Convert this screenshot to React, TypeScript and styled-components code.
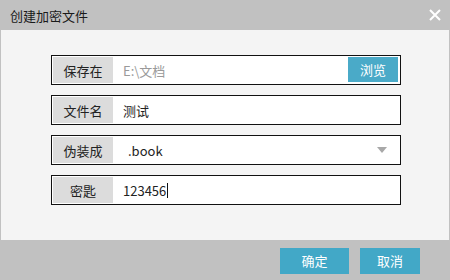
import React from "react";
import styled, { createGlobalStyle } from "styled-components";

const Global = createGlobalStyle`
  html, body { margin: 0; padding: 0; }
  body { width: 450px; height: 280px; overflow: hidden; font-family: "Noto Sans CJK SC", "Noto Sans", sans-serif; }
`;

const Dialog = styled.div`
  width: 450px;
  height: 280px;
  display: flex;
  flex-direction: column;
  background: #c1c1c1;
`;

const TitleBar = styled.div`
  height: 30px;
  display: flex;
  align-items: center;
  justify-content: space-between;
  padding: 0 9px 0 10px;
  box-sizing: border-box;
`;

const Title = styled.span`
  font-size: 13px;
  color: #1a1a1a;
`;

const Close = styled.svg`
  width: 12px;
  height: 12px;
`;

const Body = styled.div`
  height: 210px;
  margin: 0 1px;
  background: #f4f4f4;
  display: flex;
  flex-direction: column;
  gap: 10px;
  padding: 25px 0 0 50px;
  box-sizing: border-box;
`;

const Row = styled.div`
  width: 350px;
  height: 30px;
  box-sizing: border-box;
  border: 1px solid #111;
  background: #fff;
  padding: 1px;
  display: flex;
  align-items: center;
  position: relative;
`;

const Label = styled.div`
  width: 60px;
  height: 26px;
  background: #dcdcdc;
  display: flex;
  align-items: center;
  justify-content: center;
  font-size: 13px;
  color: #222;
`;

const Value = styled.div<{ $muted?: boolean; $indent?: number }>`
  flex: 1;
  padding-left: ${(p) => p.$indent ?? 10}px;
  font-size: 13px;
  color: ${(p) => (p.$muted ? "#9a9a9a" : "#222")};
  display: flex;
  align-items: center;
`;

const Caret = styled.span`
  display: inline-block;
  width: 1px;
  height: 15px;
  background: #111;
  margin-left: 1px;
`;

const Browse = styled.div`
  width: 50px;
  height: 25px;
  background: #4aaac8;
  color: #fff;
  font-size: 13px;
  display: flex;
  align-items: center;
  justify-content: center;
  margin-right: 1px;
  margin-bottom: 1px;
`;

const Arrow = styled.div`
  width: 0;
  height: 0;
  border-left: 5px solid transparent;
  border-right: 5px solid transparent;
  border-top: 6px solid #a8a8a8;
  margin-right: 12px;
`;

const Footer = styled.div`
  flex: 1;
  display: flex;
  align-items: center;
  justify-content: flex-end;
  gap: 11px;
  padding-right: 30px;
  padding-top: 1px;
`;

const Btn = styled.div<{ $w: number }>`
  width: ${(p) => p.$w}px;
  height: 26px;
  background: #42a8c7;
  color: #fff;
  font-size: 13px;
  display: flex;
  align-items: center;
  justify-content: center;
`;

export default function App() {
  return (
    <>
      <Global />
      <Dialog>
        <TitleBar>
          <Title>创建加密文件</Title>
          <Close viewBox="0 0 12 12">
            <path d="M1 1 L11 11 M11 1 L1 11" stroke="#fff" strokeWidth="2" />
          </Close>
        </TitleBar>
        <Body>
          <Row>
            <Label>保存在</Label>
            <Value $muted>E:\文档</Value>
            <Browse>浏览</Browse>
          </Row>
          <Row>
            <Label>文件名</Label>
            <Value>测试</Value>
          </Row>
          <Row>
            <Label>伪装成</Label>
            <Value $indent={15}>.book</Value>
            <Arrow />
          </Row>
          <Row>
            <Label>密匙</Label>
            <Value>
              123456
              <Caret />
            </Value>
          </Row>
        </Body>
        <Footer>
          <Btn $w={69}>确定</Btn>
          <Btn $w={60}>取消</Btn>
        </Footer>
      </Dialog>
    </>
  );
}
